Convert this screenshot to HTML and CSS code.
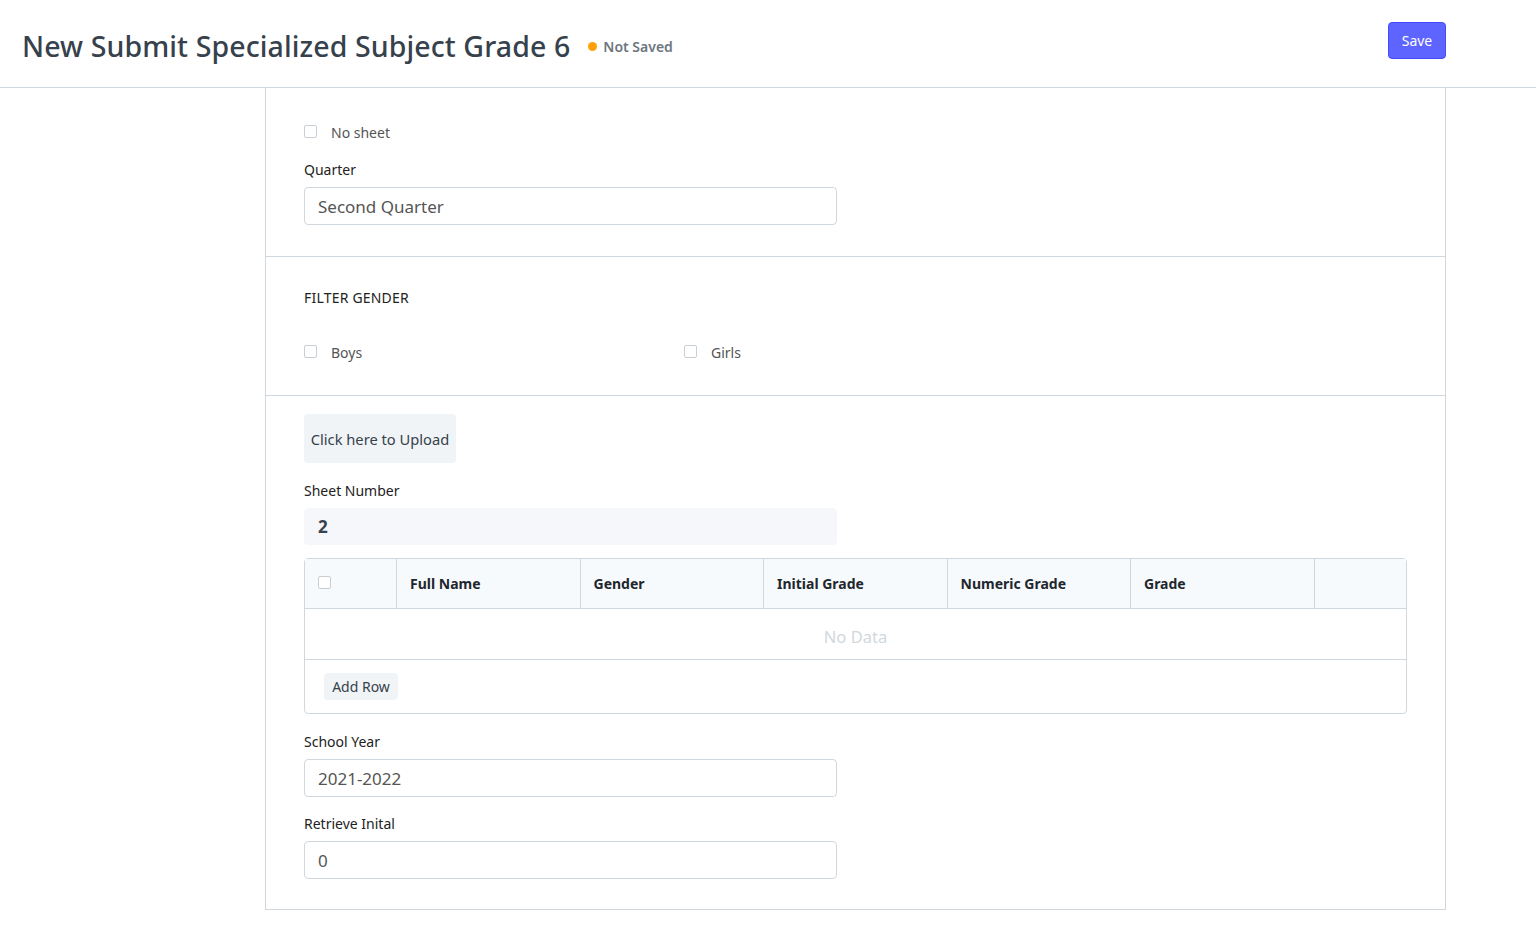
FILE: index.html
```html
<!DOCTYPE html>
<html lang="en">
<head>
  <meta charset="UTF-8">
  <meta name="viewport" content="width=device-width, initial-scale=1.0">
  <title>New Submit Specialized Subject Grade 6</title>
  <link rel="stylesheet" href="styles.css">
</head>
<body>
  <div class="page-head">
    <div class="title-wrap">
      <h1 class="page-title">New Submit Specialized Subject Grade 6</h1>
      <span class="indicator"><span class="dot"></span>Not Saved</span>
    </div>
    <button class="btn btn-primary">Save</button>
  </div>

  <div class="form-card">
    <div class="section section-first">
      <label class="check">
        <span class="box"></span>
        <span class="check-label">No sheet</span>
      </label>
      <div class="field">
        <div class="field-label">Quarter</div>
        <div class="input">Second Quarter</div>
      </div>
    </div>

    <div class="section section-gender">
      <div class="section-head">FILTER GENDER</div>
      <div class="gender-row">
        <label class="check">
          <span class="box"></span>
          <span class="check-label">Boys</span>
        </label>
        <label class="check">
          <span class="box"></span>
          <span class="check-label">Girls</span>
        </label>
      </div>
    </div>

    <div class="section section-last">
      <button class="btn btn-upload">Click here to Upload</button>
      <div class="field">
        <div class="field-label">Sheet Number</div>
        <div class="input input-readonly">2</div>
      </div>

      <div class="grid">
        <div class="grid-row grid-head">
          <div class="cell cell-check"><span class="box"></span></div>
          <div class="cell">Full Name</div>
          <div class="cell">Gender</div>
          <div class="cell">Initial Grade</div>
          <div class="cell">Numeric Grade</div>
          <div class="cell">Grade</div>
          <div class="cell cell-last"></div>
        </div>
        <div class="grid-empty">No Data</div>
        <div class="grid-footer">
          <button class="btn btn-small">Add Row</button>
        </div>
      </div>

      <div class="field">
        <div class="field-label">School Year</div>
        <div class="input">2021-2022</div>
      </div>
      <div class="field">
        <div class="field-label">Retrieve Inital</div>
        <div class="input">0</div>
      </div>
    </div>
  </div>
</body>
</html>
```

FILE: styles.css
```css
* {
  margin: 0;
  padding: 0;
  box-sizing: border-box;
}

body {
  font-family: "Noto Sans", "Open Sans", sans-serif;
  color: #36414c;
  background: #fff;
  font-size: 14px;
}

.page-head {
  height: 88px;
  border-bottom: 1px solid #d1d8dd;
  display: flex;
  align-items: flex-start;
  justify-content: space-between;
  padding: 22px 90px 0 22px;
}

.title-wrap {
  display: flex;
  align-items: center;
  gap: 18px;
  padding-top: 5px;
}

.page-title {
  font-size: 28.5px;
  font-weight: 500;
  color: #36414c;
  letter-spacing: 0.1px;
}

.indicator {
  display: flex;
  align-items: center;
  gap: 6px;
  font-size: 14px;
  font-weight: 600;
  color: #6c7680;
  padding-top: 1px;
}

.dot {
  width: 9px;
  height: 9px;
  border-radius: 50%;
  background: #ffa00a;
}

.btn {
  border: none;
  border-radius: 4px;
  font-family: inherit;
  cursor: pointer;
}

.btn-primary {
  width: 58px;
  height: 37px;
  background: #5e64ff;
  border: 1px solid #444bff;
  color: #fff;
  font-size: 14px;
}

.form-card {
  width: 1181px;
  margin-left: 265px;
  border: 1px solid #d1d8dd;
  border-top: none;
}

.section {
  padding: 0 38px;
  border-bottom: 1px solid #d1d8dd;
}

.section:last-child {
  border-bottom: none;
}

.section-first {
  height: 169px;
  padding-top: 35px;
}

.section-gender {
  height: 139px;
  padding-top: 31px;
}

.section-last {
  padding-top: 18px;
  padding-bottom: 30px;
}

.check {
  display: flex;
  align-items: center;
  gap: 14px;
  font-size: 14px;
  color: #555;
}

.box {
  display: inline-block;
  width: 13px;
  height: 13px;
  border: 1px solid #c7ced4;
  border-radius: 2px;
  background: #fff;
  margin-top: -3px;
}

.field {
  margin-top: 17px;
}

.section-first .field {
  margin-top: 18px;
}

.field-label {
  font-size: 14px;
  color: #222;
  line-height: 20px;
  margin-bottom: 7px;
}

.input {
  width: 533px;
  height: 38px;
  border: 1px solid #d1d8dd;
  border-radius: 4px;
  padding: 0 13px;
  display: flex;
  align-items: center;
  font-size: 17px;
  color: #555;
}

.input-readonly {
  border-color: #f5f7fa;
  background: #f5f7fa;
  font-weight: 700;
  color: #36414c;
  height: 37px;
}

.section-head {
  font-size: 14px;
  color: #222;
  letter-spacing: 0.2px;
}

.gender-row {
  display: grid;
  grid-template-columns: 380px 380px;
  margin-top: 36px;
}

.btn-upload {
  width: 152px;
  height: 49px;
  background: #f0f4f7;
  color: #36414c;
  font-size: 14.7px;
}

.section-last .field:first-of-type {
  margin-top: 18px;
}

.grid {
  margin-top: 13px;
  width: 1103px;
  border: 1px solid #d1d8dd;
  border-radius: 4px;
  margin-bottom: 18px;
}

.grid-row {
  display: grid;
  grid-template-columns: 92px repeat(5, 183.5px) 1fr;
}

.grid-head {
  height: 50px;
  background: #f7fafc;
  border-bottom: 1px solid #d1d8dd;
  font-weight: 700;
  color: #1f272e;
}

.cell {
  display: flex;
  align-items: center;
  padding-left: 13px;
  border-right: 1px solid #d1d8dd;
}

.cell-last {
  border-right: none;
}

.grid-empty {
  height: 51px;
  padding-top: 4px;
  display: flex;
  align-items: center;
  justify-content: center;
  font-size: 16.5px;
  color: #d1d8dd;
  border-bottom: 1px solid #d1d8dd;
}

.grid-footer {
  height: 53px;
  padding: 13px 19px;
}

.btn-small {
  width: 74px;
  height: 27px;
  background: #f0f4f7;
  color: #36414c;
  font-size: 14px;
}
```
